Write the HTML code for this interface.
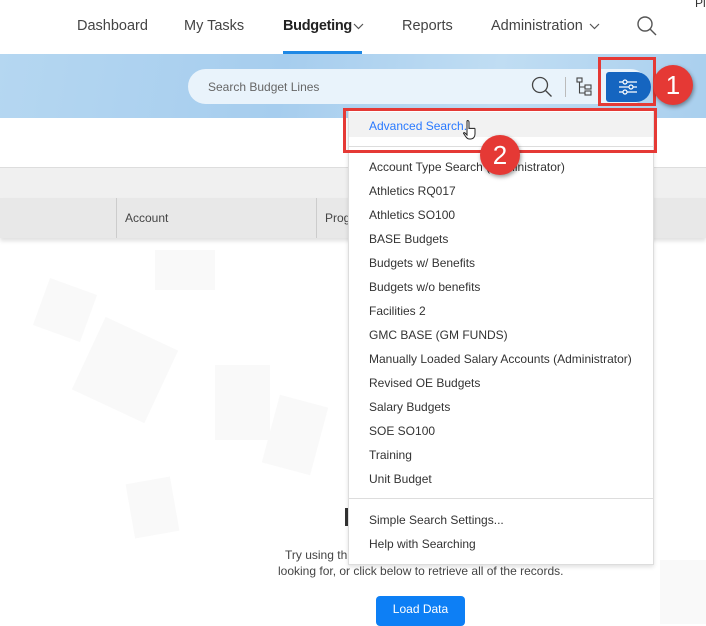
<!DOCTYPE html>
<html><head><style>
*{margin:0;padding:0;box-sizing:border-box}
body{width:706px;height:624px;overflow:hidden;position:relative;background:#fff;font-family:"Liberation Sans",sans-serif;color:#333}
.a{position:absolute;white-space:nowrap}
.nav{font-size:14.5px;color:#444;top:18px}
.band{top:54px;left:0;width:706px;height:64px;background:linear-gradient(100deg,#b5d7f1,#a6cdee 40%,#c0ddf3 70%,#a9cfee)}
.mi{left:369px;font-size:12px;color:#333}
.sq{position:absolute;background:#f9f9f9}
</style></head><body>
<div class="a" style="left:695px;top:-4px;font-size:12px;color:#333">Pl</div>
<div class="a nav" style="left:77px">Dashboard</div>
<div class="a nav" style="left:184px">My Tasks</div>
<div class="a nav" style="left:283px;font-weight:bold;color:#222;letter-spacing:-0.3px">Budgeting</div>
<svg class="a" style="left:353px;top:23px" width="11" height="8"><path d="M1 1l4.5 4.5L10 1" fill="none" stroke="#555" stroke-width="1.2"/></svg>
<div class="a" style="left:283px;top:51px;width:79px;height:3px;background:#1e88e5"></div>
<div class="a nav" style="left:402px">Reports</div>
<div class="a nav" style="left:491px">Administration</div>
<svg class="a" style="left:589px;top:23px" width="11" height="8"><path d="M1 1l4.5 4.5L10 1" fill="none" stroke="#555" stroke-width="1.2"/></svg>
<svg class="a" style="left:636px;top:15px" width="22" height="22"><circle cx="9" cy="9" r="7" fill="none" stroke="#555" stroke-width="1.4"/><path d="M14 14l6 6" stroke="#555" stroke-width="1.4"/></svg>

<div class="a band"></div>
<div class="a" style="left:188px;top:69px;width:460px;height:35px;border-radius:18px;background:#e9f3fb"></div>
<div class="a" style="left:208px;top:80px;font-size:12px;color:#666">Search Budget Lines</div>
<svg class="a" style="left:530px;top:75px" width="24" height="24"><circle cx="10" cy="10" r="7.5" fill="none" stroke="#444" stroke-width="1.3"/><path d="M15.5 15.5l6 6" stroke="#444" stroke-width="1.3"/></svg>
<div class="a" style="left:565px;top:77px;width:1px;height:20px;background:#bbb"></div>
<svg class="a" style="left:576px;top:77px" width="18" height="20"><g fill="none" stroke="#444" stroke-width="1.1"><rect x="1" y="1" width="5" height="4"/><rect x="9" y="8" width="6" height="4"/><rect x="9" y="14" width="6" height="4"/><path d="M3.5 5v11h5.5M3.5 10h5.5"/></g></svg>
<div class="a" style="left:606px;top:72px;width:45px;height:30px;background:#1565c0;border-radius:3px 15px 15px 3px"></div>
<svg class="a" style="left:617px;top:77px" width="22" height="20"><g stroke="#fff" stroke-width="1.2" fill="#1565c0"><path d="M2 5h18M2 10h18M2 15h18"/><circle cx="8" cy="5" r="2"/><circle cx="14" cy="10" r="2"/><circle cx="8" cy="15" r="2"/></g></svg>
<div class="a" style="left:598px;top:57px;width:58px;height:49px;border:3px solid #e53935"></div>
<div class="a" style="left:653px;top:65px;width:40px;height:40px;border-radius:50%;background:#e53935;color:#fff;font-size:26px;text-align:center;line-height:40px;box-shadow:1px 2px 4px rgba(0,0,0,.4)">1</div>

<div class="a" style="left:0;top:167px;width:706px;height:31px;background:#f0f0f0;border-top:1px solid #ddd"></div>
<div class="a" style="left:0;top:198px;width:706px;height:40px;background:#e8e8e8;box-shadow:0 3px 4px rgba(0,0,0,.12)"></div>
<div class="a" style="left:116px;top:198px;width:1px;height:40px;background:#ccc"></div>
<div class="a" style="left:316px;top:198px;width:1px;height:40px;background:#ccc"></div>
<div class="a" style="left:125px;top:211px;font-size:12px;color:#444">Account</div>
<div class="a" style="left:325px;top:211px;font-size:12px;color:#444">Prog</div>

<div class="sq" style="left:40px;top:285px;width:50px;height:50px;transform:rotate(20deg)"></div>
<div class="sq" style="left:155px;top:250px;width:60px;height:40px"></div>
<div class="sq" style="left:85px;top:330px;width:80px;height:80px;transform:rotate(25deg)"></div>
<div class="sq" style="left:215px;top:365px;width:55px;height:75px"></div>
<div class="sq" style="left:130px;top:480px;width:45px;height:55px;transform:rotate(-10deg)"></div>
<div class="sq" style="left:660px;top:560px;width:46px;height:64px"></div>
<div class="sq" style="left:270px;top:400px;width:50px;height:70px;transform:rotate(15deg)"></div>

<div class="a" style="left:345px;top:508px;width:4px;height:18px;background:#333"></div>
<div class="a" style="left:285px;top:548px;font-size:12px;color:#444">Try using th</div>
<div class="a" style="left:278px;top:564px;font-size:12px;color:#444">looking for, or click below to retrieve all of the records.</div>
<div class="a" style="left:376px;top:596px;width:89px;height:30px;background:#0d7ff5;border-radius:4px;color:#fff;font-size:12px;text-align:center;line-height:27px">Load Data</div>

<div class="a" style="left:348px;top:108px;width:306px;height:457px;background:#fff;border:1px solid #ddd;box-shadow:0 2px 4px rgba(0,0,0,.12)"></div>
<div class="a" style="left:349px;top:112px;width:304px;height:25px;background:#f2f2f2"></div>
<div class="a mi" style="top:119px;color:#2979ff">Advanced Search...</div>
<div class="a" style="left:349px;top:146px;width:304px;height:1px;background:#ddd"></div>
<div class="a mi" style="top:160px">Account Type Search (Administrator)</div>
<div class="a mi" style="top:184px">Athletics RQ017</div>
<div class="a mi" style="top:208px">Athletics SO100</div>
<div class="a mi" style="top:232px">BASE Budgets</div>
<div class="a mi" style="top:256px">Budgets w/ Benefits</div>
<div class="a mi" style="top:280px">Budgets w/o benefits</div>
<div class="a mi" style="top:304px">Facilities 2</div>
<div class="a mi" style="top:328px">GMC BASE (GM FUNDS)</div>
<div class="a mi" style="top:352px">Manually Loaded Salary Accounts (Administrator)</div>
<div class="a mi" style="top:376px">Revised OE Budgets</div>
<div class="a mi" style="top:400px">Salary Budgets</div>
<div class="a mi" style="top:424px">SOE SO100</div>
<div class="a mi" style="top:448px">Training</div>
<div class="a mi" style="top:472px">Unit Budget</div>
<div class="a" style="left:349px;top:498px;width:304px;height:1px;background:#ddd"></div>
<div class="a mi" style="top:513px">Simple Search Settings...</div>
<div class="a mi" style="top:537px">Help with Searching</div>

<div class="a" style="left:343px;top:108px;width:314px;height:45px;border:3px solid #e53935"></div>
<div class="a" style="left:480px;top:135px;width:40px;height:40px;border-radius:50%;background:#e53935;color:#fff;font-size:26px;text-align:center;line-height:40px;box-shadow:1px 2px 4px rgba(0,0,0,.4)">2</div>
<svg class="a" style="left:462px;top:119px" width="16" height="22"><path d="M5 2c1-1 2 0 2 1v7c0-1 2-1 2 0 0-1 2-1 2 0 0-1 2-1 2 0v5c0 3-2 5-4 5H7c-2 0-3-2-5-5-1-1 0-2 1-1l2 2V3z" fill="#fff" stroke="#222" stroke-width="1"/></svg>
</body></html>
